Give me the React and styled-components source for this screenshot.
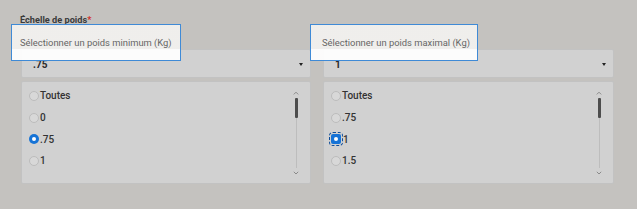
import React from 'react'
import styled, { createGlobalStyle } from 'styled-components'

const GlobalStyle = createGlobalStyle`
  html, body {
    margin: 0;
    padding: 0;
    background: #c4c2bf;
    font-family: Roboto, 'Liberation Sans', sans-serif;
  }
`

const Page = styled.div`
  width: 637px;
  height: 209px;
  box-sizing: border-box;
  padding: 14px 0 0 20px;
`

const FieldLabel = styled.div`
  font-size: 9.2px;
  font-weight: 700;
  color: #3a3a3a;
  height: 12px;
  line-height: 12px;
  margin-bottom: 23px;
`

const Required = styled.span`
  color: #d0302a;
`

const Columns = styled.div`
  display: grid;
  grid-template-columns: 290px 291px;
  column-gap: 12px;
  margin-left: 1px;
`

const Column = styled.div`
  position: relative;
  display: flex;
  flex-direction: column;
  gap: 3px;
`

const Hint = styled.div`
  position: absolute;
  top: -25px;
  left: ${p => p.$left}px;
  width: ${p => p.$width}px;
  height: 37px;
  box-sizing: border-box;
  border: 1.5px solid #3f8ad6;
  background: linear-gradient(to bottom, rgba(244, 243, 241, 0.9) 0, rgba(244, 243, 241, 0.9) 24px, rgba(255, 255, 255, 0.94) 24px);
  padding: 12px 0 0 ${p => p.$pad}px;
  font-size: 9.4px;
  color: #666;
  white-space: nowrap;
  z-index: 2;
`

const Select = styled.div`
  height: 29px;
  box-sizing: border-box;
  background: #d1d1d1;
  border: 1px solid #c2c2c2;
  border-radius: 2px;
  display: flex;
  align-items: center;
  justify-content: space-between;
  padding: 2px 7px 0 11px;
  font-size: 10px;
  font-weight: 700;
  color: #2a2a2a;
`

const Caret = styled.span`
  width: 0;
  height: 0;
  border-left: 2px solid transparent;
  border-right: 2px solid transparent;
  border-top: 3px solid #222;
`

const ListBox = styled.div`
  position: relative;
  height: 103px;
  box-sizing: border-box;
  background: #d1d1d1;
  border: 1px solid #c2c2c2;
  border-radius: 2px;
  padding: 3px 0 0 7px;
`

const Option = styled.div`
  height: 21.7px;
  display: flex;
  align-items: center;
  font-size: 10px;
  font-weight: 500;
  color: #333;
`

const Radio = styled.span`
  width: 10px;
  height: 10px;
  box-sizing: border-box;
  border-radius: 50%;
  border: 1px solid #bcbcbc;
  background: #d8d8d8;
  margin-right: 1px;
  flex-shrink: 0;
`

const RadioChecked = styled.span`
  width: 10px;
  height: 10px;
  box-sizing: border-box;
  border-radius: 50%;
  background: #1673d6;
  margin-right: 1px;
  position: relative;
  flex-shrink: 0;
  &::after {
    content: '';
    position: absolute;
    left: 3px;
    top: 3px;
    width: 4px;
    height: 4px;
    border-radius: 50%;
    background: #fff;
  }
`

const RadioFocused = styled.span`
  width: 10px;
  height: 10px;
  box-sizing: border-box;
  border-radius: 2px;
  background: #1673d6;
  outline: 1px dashed #0f4d99;
  outline-offset: 1px;
  margin-right: 2px;
  position: relative;
  flex-shrink: 0;
  &::after {
    content: '';
    position: absolute;
    left: 3px;
    top: 3px;
    width: 4px;
    height: 4px;
    border-radius: 50%;
    background: #fff;
  }
`

const Scrollbar = styled.div`
  position: absolute;
  top: 9px;
  right: 10px;
  width: 8px;
  height: 84px;
  display: flex;
  flex-direction: column;
  align-items: center;
`

const Arrow = styled.svg`
  width: 6px;
  height: 4px;
  flex-shrink: 0;
`

const Track = styled.div`
  flex: 1;
  width: 1px;
  background: #bdbdbd;
  margin: 3px 0;
  position: relative;
`

const Thumb = styled.div`
  position: absolute;
  left: -1px;
  top: 0;
  width: 3px;
  height: 20px;
  border-radius: 1px;
  background: #4d4d4d;
`

const Up = () => (
  <Arrow viewBox="0 0 6 4">
    <path d="M0.8 3.4 L3 1.2 L5.2 3.4" fill="none" stroke="#8a8a8a" strokeWidth="1" />
  </Arrow>
)

const Down = () => (
  <Arrow viewBox="0 0 6 4">
    <path d="M0.8 0.8 L3 3 L5.2 0.8" fill="none" stroke="#8a8a8a" strokeWidth="1" />
  </Arrow>
)

const WeightColumn = ({ hint, hintLeft, hintWidth, hintPad, value, options, selected, focused }) => (
  <Column>
    <Hint $left={hintLeft} $width={hintWidth} $pad={hintPad}>{hint}</Hint>
    <Select>
      <span>{value}</span>
      <Caret />
    </Select>
    <ListBox>
      {options.map(o => (
        <Option key={o}>
          {o === selected ? (focused ? <RadioFocused /> : <RadioChecked />) : <Radio />}
          {o}
        </Option>
      ))}
      <Scrollbar>
        <Up />
        <Track>
          <Thumb />
        </Track>
        <Down />
      </Scrollbar>
    </ListBox>
  </Column>
)

export default function App() {
  return (
    <>
      <GlobalStyle />
      <Page>
        <FieldLabel>
          Échelle de poids<Required>*</Required>
        </FieldLabel>
        <Columns>
          <WeightColumn
            hint="Sélectionner un poids minimum (Kg)"
            hintLeft={-10}
            hintWidth={170}
            hintPad={8}
            value=".75"
            options={['Toutes', '0', '.75', '1']}
            selected=".75"
          />
          <WeightColumn
            hint="Sélectionner un poids maximal (Kg)"
            hintLeft={-13}
            hintWidth={168}
            hintPad={11}
            value="1"
            options={['Toutes', '.75', '1', '1.5']}
            selected="1"
            focused
          />
        </Columns>
      </Page>
    </>
  )
}
